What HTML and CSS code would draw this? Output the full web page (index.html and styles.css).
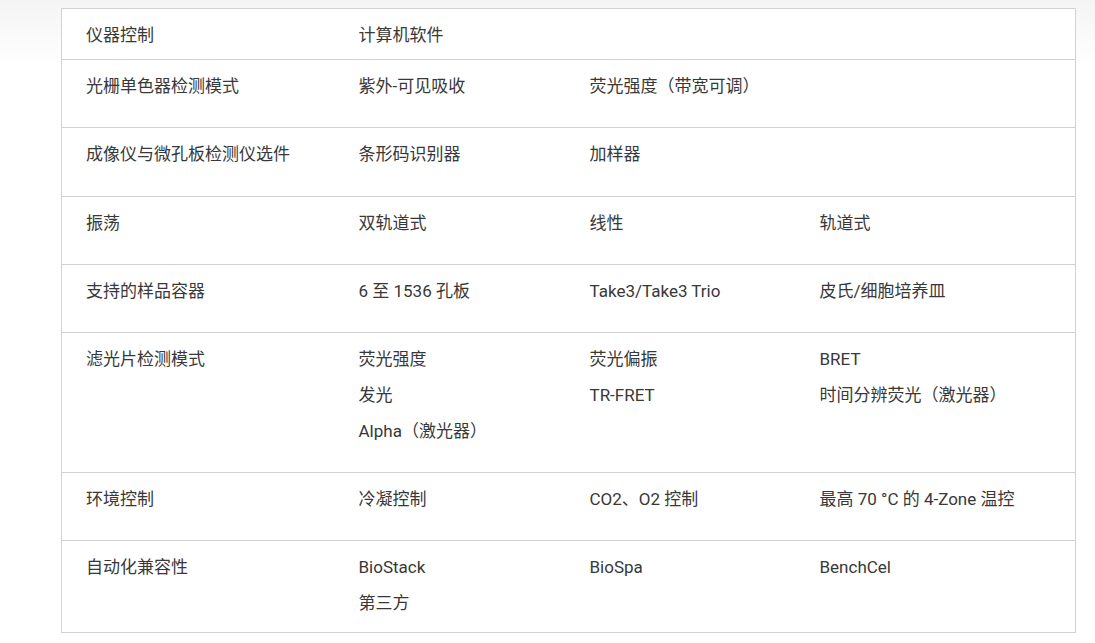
FILE: index.html
```html
<!DOCTYPE html>
<html lang="zh-CN">
<head>
<meta charset="utf-8">
<title>规格</title>
<link rel="stylesheet" href="styles.css">
</head>
<body>
<div class="page">
  <table class="spec">
    <colgroup>
      <col class="c1"><col class="c2"><col class="c3"><col class="c4">
    </colgroup>
    <tbody>
      <tr class="first">
        <td>仪器控制</td>
        <td>计算机软件</td>
        <td></td>
        <td></td>
      </tr>
      <tr>
        <td>光栅单色器检测模式</td>
        <td>紫外-可见吸收</td>
        <td>荧光强度（带宽可调）</td>
        <td></td>
      </tr>
      <tr class="extra">
        <td>成像仪与微孔板检测仪选件</td>
        <td>条形码识别器</td>
        <td>加样器</td>
        <td></td>
      </tr>
      <tr>
        <td>振荡</td>
        <td>双轨道式</td>
        <td>线性</td>
        <td>轨道式</td>
      </tr>
      <tr>
        <td>支持的样品容器</td>
        <td>6 至 1536 孔板</td>
        <td>Take3/Take3 Trio</td>
        <td>皮氏/细胞培养皿</td>
      </tr>
      <tr>
        <td>滤光片检测模式</td>
        <td><div>荧光强度</div><div>发光</div><div>Alpha（激光器）</div></td>
        <td><div>荧光偏振</div><div>TR-FRET</div></td>
        <td><div>BRET</div><div>时间分辨荧光（激光器）</div></td>
      </tr>
      <tr>
        <td>环境控制</td>
        <td>冷凝控制</td>
        <td>CO2、O2 控制</td>
        <td>最高 70 °C 的 4-Zone 温控</td>
      </tr>
      <tr class="last">
        <td>自动化兼容性</td>
        <td><div>BioStack</div><div>第三方</div></td>
        <td>BioSpa</td>
        <td>BenchCel</td>
      </tr>
    </tbody>
  </table>
</div>
</body>
</html>
```

FILE: styles.css
```css
html, body {
  margin: 0;
  padding: 0;
}
body {
  background: linear-gradient(to bottom, #f4f4f4 0px, #fbfbfb 40px, #ffffff 70px) no-repeat;
  background-color: #ffffff;
  font-family: Roboto, "Noto Sans CJK SC", sans-serif;
  font-size: 17px;
  color: #383838;
  min-height: 643px;
}
.page {
  padding: 8px 0 0 61px;
}
.spec {
  width: 1015px;
  border-collapse: collapse;
  border: 1px solid #d2d2d2;
  background: #ffffff;
  table-layout: fixed;
}
.spec col.c1 { width: 273px; }
.spec col.c2 { width: 231px; }
.spec col.c3 { width: 230px; }
.spec col.c4 { width: auto; }
.spec tr {
  border-top: 1px solid #d2d2d2;
}
.spec td {
  vertical-align: top;
  padding: 8px 10px 23px 24px;
  line-height: 36px;
  white-space: nowrap;
}
.spec tr.first td {
  padding-top: 8px;
  padding-bottom: 6px;
}
.spec tr.extra td {
  padding-bottom: 24px;
}
.spec tr.last td {
  padding-bottom: 11px;
}
```
